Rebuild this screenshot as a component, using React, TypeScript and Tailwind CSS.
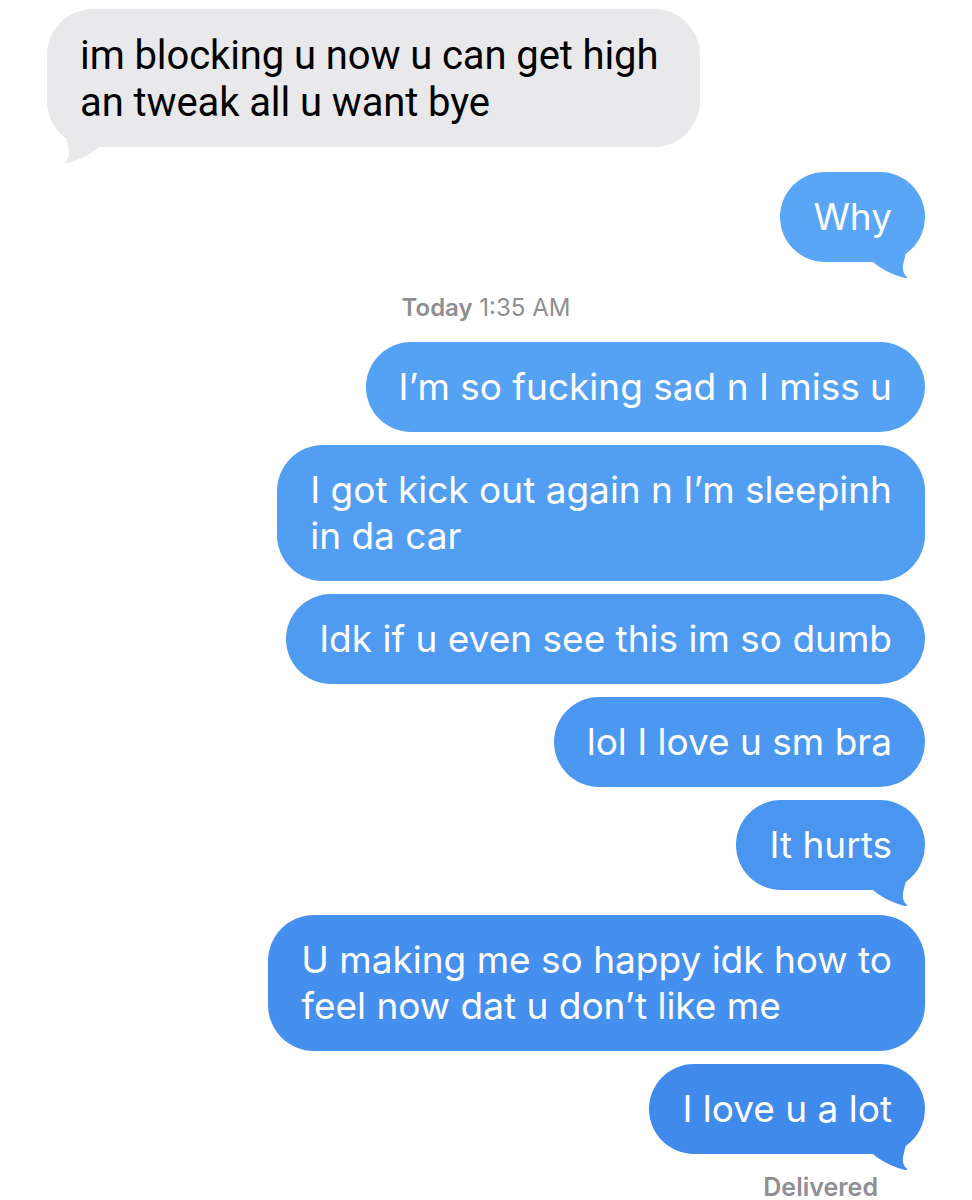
import React from 'react';

type Msg = {
  text: string;
  tail?: boolean;
  gap: string;
  bg: string;
  fill: string;
};

const sent: Msg[] = [
  { text: 'Why', tail: true, gap: 'mt-[25px]', bg: 'bg-[#58a6f5]', fill: 'fill-[#58a6f5]' },
];

const afterStamp: Msg[] = [
  { text: 'I’m so fucking sad n I miss u', gap: 'mt-0', bg: 'bg-[#55a2f4]', fill: 'fill-[#55a2f4]' },
  { text: 'I got kick out again n I’m sleepinh\nin da car', gap: 'mt-[13px]', bg: 'bg-[#529ef3]', fill: 'fill-[#529ef3]' },
  { text: 'Idk if u even see this im so dumb', gap: 'mt-[13px]', bg: 'bg-[#4f9bf2]', fill: 'fill-[#4f9bf2]' },
  { text: 'lol I love u sm bra', gap: 'mt-[13px]', bg: 'bg-[#4c98f1]', fill: 'fill-[#4c98f1]' },
  { text: 'It hurts', tail: true, gap: 'mt-[13px]', bg: 'bg-[#4995f0]', fill: 'fill-[#4995f0]' },
  { text: 'U making me so happy idk how to\nfeel now dat u don’t like me', gap: 'mt-[25px]', bg: 'bg-[#4590ee]', fill: 'fill-[#4590ee]' },
  { text: 'I love u a lot', tail: true, gap: 'mt-[13px]', bg: 'bg-[#408aec]', fill: 'fill-[#408aec]' },
];

// little hooked tail under the bubble corner, drawn for the right side
const Tail = ({ fill, left }: { fill: string; left?: boolean }) => (
  <svg
    viewBox="0 0 60 40"
    className={`absolute bottom-[-16px] h-[40px] w-[60px] ${fill} ${left ? 'left-0 -scale-x-100' : 'right-0'}`}
  >
    <path d="M3 11 L41 11 C41 19 37 26 38 32 C38.5 35 40 37 42 39 C42.6 39.8 41.6 40.4 40.4 40.1 C31 38 19 33 8 24 Z" />
  </svg>
);

const Sent = ({ m }: { m: Msg }) => (
  <div className={`relative ${m.gap} self-end`}>
    <div
      className={`relative z-10 rounded-[46px] ${m.bg} px-[33px] py-[22px] text-[37px] leading-[46px] whitespace-pre-line text-white`}
    >
      {m.text}
    </div>
    {m.tail && <Tail fill={m.fill} />}
  </div>
);

export default function App() {
  return (
    <div className="min-h-[1200px] w-[972px] overflow-hidden bg-white px-[47px] pt-[9px] font-['Inter','Noto_Sans',sans-serif]">
      <div className="flex flex-col">
        {/* incoming */}
        <div className="relative self-start">
          <div className="relative z-10 rounded-[46px] bg-[#e9e9eb] pt-[23px] pb-[21px] pl-[33px] pr-[42px] font-['Roboto','Liberation_Sans',sans-serif] text-[40px] leading-[47px] tracking-[-0.1px] whitespace-pre-line text-black">
            {'im blocking u now u can get high\nan tweak all u want bye'}
          </div>
          <Tail fill="fill-[#e9e9eb]" left />
        </div>

        {sent.map((m, i) => (
          <Sent key={i} m={m} />
        ))}

        <div className="mt-[31px] mb-[20px] text-center text-[24px] leading-[29px] text-[#8e8e93]">
          <span className="font-semibold">Today</span> 1:35 AM
        </div>

        {afterStamp.map((m, i) => (
          <Sent key={i} m={m} />
        ))}

        <div className="mt-[18px] self-end pr-[47px] text-[25px] leading-[30px] font-semibold text-[#8e8e93]">
          Delivered
        </div>
      </div>
    </div>
  );
}
